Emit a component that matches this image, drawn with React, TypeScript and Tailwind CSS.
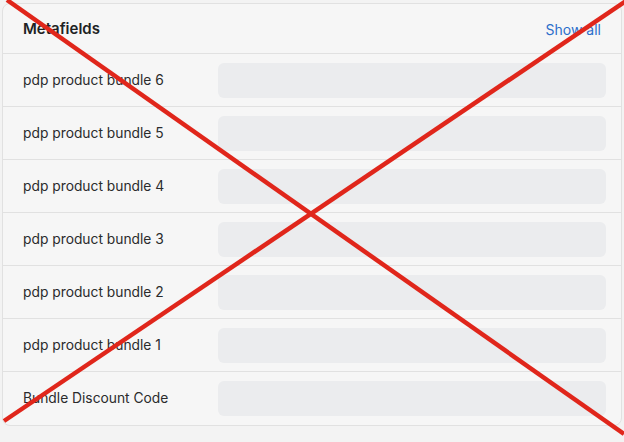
import React from 'react'

const ROWS = [
  'pdp product bundle 6',
  'pdp product bundle 5',
  'pdp product bundle 4',
  'pdp product bundle 3',
  'pdp product bundle 2',
  'pdp product bundle 1',
  'Bundle Discount Code',
]

export default function App() {
  return (
    <div className="relative w-[624px] h-[442px] overflow-hidden bg-[#f3f3f3] pt-[3px] pl-[2px] pr-[2px] font-['Inter',sans-serif] text-[#2a2b2c]">
      {/* Card */}
      <div className="w-[620px] bg-[#f6f6f6] border border-[#e1e1e1] rounded-lg">
        <div className="h-[50px] flex items-center justify-between pt-[2px] pl-[20px] pr-[20px] border-b border-[#e1e1e1]">
          <span className="text-[15px] font-semibold text-[#202223]">Metafields</span>
          <span className="text-[14px] text-[#2c6ecb]">Show all</span>
        </div>
        {ROWS.map((r, i) => (
          <div
            key={r}
            className={`h-[53px] flex items-center pl-[20px] pr-[15px] ${i < ROWS.length - 1 ? 'border-b border-[#e1e1e1]' : ''}`}
          >
            <span className="w-[195px] text-[13.8px]">{r}</span>
            <div className="flex-1 h-[35px] rounded-md bg-[#ebecee]" />
          </div>
        ))}
      </div>

      {/* Red cross overlay */}
      <svg className="absolute inset-0 pointer-events-none" width="624" height="442" viewBox="0 0 624 442">
        <line x1="7" y1="0" x2="624" y2="434" stroke="#e0261b" strokeWidth="4.5" />
        <line x1="4" y1="421" x2="626" y2="1" stroke="#e0261b" strokeWidth="4.5" />
      </svg>
    </div>
  )
}
